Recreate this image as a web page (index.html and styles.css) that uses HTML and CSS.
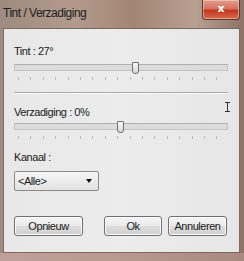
FILE: index.html
```html
<!DOCTYPE html>
<html>
<head>
<meta charset="utf-8">
<link rel="stylesheet" href="styles.css">
</head>
<body>
<div class="window">
  <div class="titlebar">
    <span class="title">Tint / Verzadiging</span>
    <div class="close"><span>x</span></div>
  </div>
  <div class="client">
    <div class="label l1">Tint : 27°</div>
    <div class="slider s1">
      <div class="track"></div>
      <div class="thumb" style="left: 118px"></div>
    </div>
    <div class="ticks"></div>
    <div class="sep"></div>
    <div class="label l2">Verzadiging : 0%</div>
    <div class="cursor"></div>
    <div class="slider s2">
      <div class="track"></div>
      <div class="thumb" style="left: 103px"></div>
    </div>
    <div class="ticks"></div>
    <div class="label l3">Kanaal :</div>
    <div class="select"><span>&lt;Alle&gt;</span><span class="arrow"></span></div>
    <div class="buttons">
      <div class="btn b1">Opnieuw</div>
      <div class="btn b2">Ok</div>
      <div class="btn b3">Annuleren</div>
    </div>
  </div>
  <div class="bottom"></div>
</div>
</body>
</html>
```

FILE: styles.css
```css
html, body {
  margin: 0;
  padding: 0;
}
body {
  width: 244px;
  height: 261px;
  overflow: hidden;
  font-family: "Liberation Sans", Arial, sans-serif;
  font-size: 11px;
  letter-spacing: -0.45px;
  color: #1a1a1a;
}
.window {
  width: 244px;
  height: 261px;
  display: flex;
  flex-direction: column;
  background: linear-gradient(90deg, #9e8a80 0%, #b39a8c 30%, #a38574 55%, #b8a192 80%, #8c7266 100%);
}
.titlebar {
  height: 28px;
  display: flex;
  justify-content: space-between;
  align-items: flex-start;
  flex: none;
}
.title {
  margin: 6px 0 0 3px;
  font-size: 12px;
  letter-spacing: -0.5px;
  color: #202020;
}
.close {
  width: 36px;
  height: 19px;
  margin-right: 4px;
  border: 1px solid #5a3a30;
  border-top: none;
  border-radius: 0 0 4px 4px;
  background: linear-gradient(#e0a090 0%, #d87060 45%, #c03820 55%, #d86a4a 100%);
  display: flex;
  justify-content: center;
  align-items: center;
  box-shadow: inset 0 0 0 1px rgba(255,220,200,0.5);
}
.close span {
  color: #fff;
  font-family: "DejaVu Sans", sans-serif;
  font-weight: bold;
  font-size: 11px;
  letter-spacing: 0;
  line-height: 1;
  margin-top: -2px;
}
.client {
  flex: 1;
  margin: 0 4px 0 3px;
  background: linear-gradient(90deg, #e8e8e8, #ececec 50%, #e6e6e6);
  border: 1px solid #7c6a60;
  position: relative;
  display: flex;
  flex-direction: column;
  padding: 0 11px 0 10px;
}
.label {
  line-height: 14px;
}
.l1 { margin-top: 15px; }
.slider {
  position: relative;
  height: 12px;
}
.s1 { margin-top: 5px; }
.s2 { margin-top: 3px; }
.track {
  position: absolute;
  left: 0;
  right: 0;
  top: 1px;
  height: 5px;
  background: #dcdcdc;
  border: 1px solid #c4c4c4;
  border-top-color: #b0b0b0;
}
.thumb {
  position: absolute;
  top: -1px;
  width: 5px;
  height: 10px;
  border: 1px solid #707070;
  border-radius: 1px 1px 3px 3px;
  background: linear-gradient(#f8f8f8, #d8d8d8);
}
.ticks {
  height: 3px;
  margin: 2px 3px 0 4px;
  background: repeating-linear-gradient(90deg, #b8b8b8 0 1px, transparent 1px 12.4px);
}
.sep {
  height: 1px;
  background: #a9a9a9;
  margin-top: 12px;
  border-bottom: 1px solid #fafafa;
}
.l2 { margin-top: 11px; }
.cursor {
  position: absolute;
  right: 11px;
  top: 73px;
  width: 1px;
  height: 10px;
  background: #333;
}
.cursor::before, .cursor::after {
  content: "";
  position: absolute;
  left: -2px;
  width: 5px;
  height: 1px;
  background: #333;
}
.cursor::before { top: 0; }
.cursor::after { bottom: 0; }
.l3 { margin-top: 11px; }
.select {
  margin-top: 7px;
  width: 85px;
  height: 20px;
  border: 1px solid #8a8a8a;
  border-radius: 2px;
  background: linear-gradient(#f6f6f6, #e2e2e2);
  display: flex;
  align-items: center;
  justify-content: space-between;
  padding: 0 6px 0 3px;
  box-sizing: border-box;
}
.arrow {
  width: 0;
  height: 0;
  border-left: 3px solid transparent;
  border-right: 3px solid transparent;
  border-top: 4px solid #111;
}
.buttons {
  display: flex;
  margin-top: 25px;
}
.btn {
  height: 20px;
  box-sizing: border-box;
  border: 1px solid #707070;
  border-radius: 3px;
  background: linear-gradient(#f4f4f4 0%, #ebebeb 50%, #dddddd 52%, #cfcfcf 100%);
  box-shadow: inset 0 0 0 1px #fbfbfb;
  display: flex;
  align-items: center;
  justify-content: center;
}
.b1 { width: 69px; }
.b2 { width: 58px; margin-left: 21px; }
.b3 { width: 59px; margin-left: 6px; }
.bottom {
  height: 8px;
  flex: none;
  background: linear-gradient(90deg, #c0a09a, #b89890 50%, #a88880);
}
```
